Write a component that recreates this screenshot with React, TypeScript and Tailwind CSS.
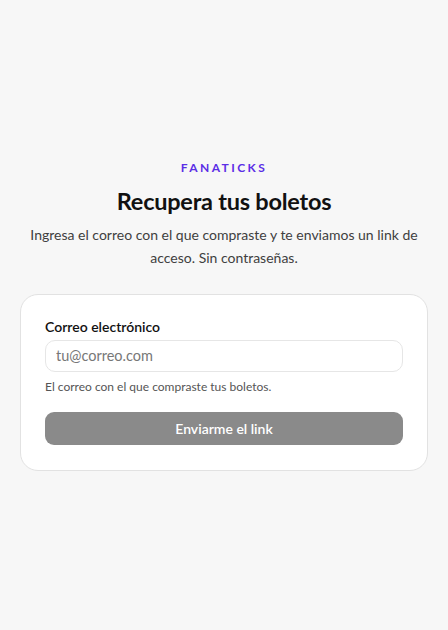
import React, { useState } from 'react';

function App() {
  const [email, setEmail] = useState('');

  return (
    <div
      className="min-h-screen bg-[#f7f7f7] flex items-center justify-center px-5"
      style={{ fontFamily: 'Lato, "Noto Sans", sans-serif' }}
    >
      <div className="w-full flex flex-col items-center">
        <p className="text-[12px] font-bold tracking-[0.2em] text-[#5b2ee6] leading-4">FANATICKS</p>
        <h1 className="mt-[9px] text-[23.5px] font-bold text-[#111111] leading-8 tracking-[-0.01em]">
          Recupera tus boletos
        </h1>
        <p className="mt-[6px] text-[14px] leading-[23px] text-[#404040] text-center px-2">
          Ingresa el correo con el que compraste y te enviamos un link de acceso. Sin contraseñas.
        </p>

        <div className="mt-[25px] w-full bg-white border border-[#e2e2e2] rounded-[18px] px-6 pt-[22px] pb-[25px]">
          <label className="block text-[14px] font-semibold text-[#111111] leading-5">
            Correo electrónico
          </label>
          <input
            type="email"
            value={email}
            onChange={(e) => setEmail(e.target.value)}
            placeholder="tu@correo.com"
            className="mt-[3px] w-full h-[32px] rounded-[10px] border border-[#e6e6e6] bg-white px-[10px] text-[14.5px] text-[#222] placeholder:text-[#777] outline-none"
          />
          <p className="mt-[7px] text-[12px] leading-4 text-[#555555]">
            El correo con el que compraste tus boletos.
          </p>
          <button
            disabled
            className="mt-[17px] w-full h-[33px] rounded-[9px] bg-[#8a8a8a] text-white text-[14px] font-semibold"
          >
            Enviarme el link
          </button>
        </div>
      </div>
    </div>
  );
}

export default App;
